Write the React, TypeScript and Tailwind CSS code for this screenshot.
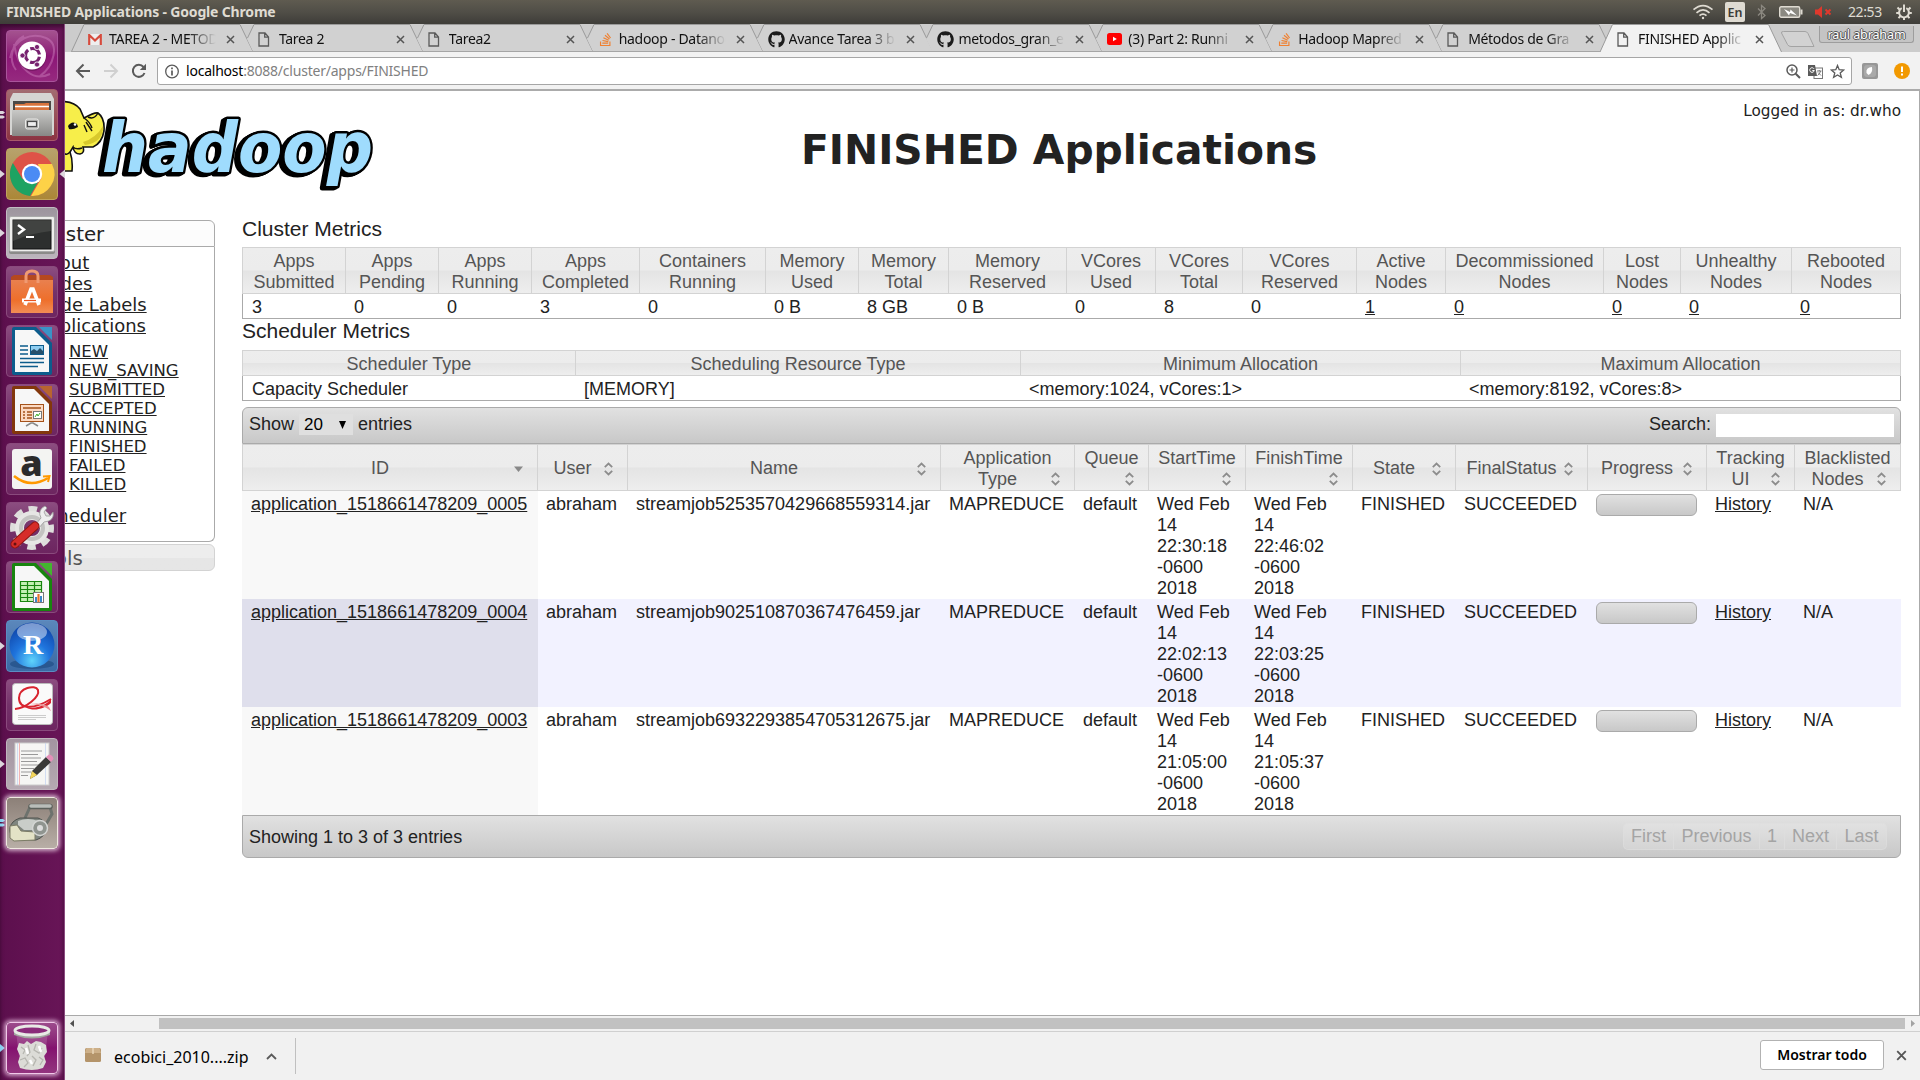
import React from "react";
import { FaGithub, FaStackOverflow } from "react-icons/fa";

/* ---------- top panel ---------- */

function Panel() {
  return (
    <header className="flex h-6 shrink-0 items-center bg-linear-to-b from-[#5f5b50] via-[#504e47] to-[#3e3d39] font-['Noto_Sans',sans-serif] text-[#dfdbd2]">
      <h1 className="pl-1.5 text-[14px] leading-6 font-bold tracking-[-0.17px] whitespace-pre">FINISHED Applications - Google Chrome</h1>
      <div className="ml-auto flex h-6 items-center pr-2">
        <svg width="22" height="18" viewBox="0 0 22 18" fill="none" stroke="#dfdbd2" strokeWidth="1.7" className="mr-[11px]">
          <path d="M1.5 6.6Q11-1.5 20.500 6.600M4.500 9.800Q11 4 17.500 9.800M7.500 12.700Q11 9.600 14.500 12.700" />
          <circle cx="11" cy="15" r="1.2" fill="#dfdbd2" stroke="none" />
        </svg>
        <span className="mr-3 h-5 w-5 rounded-[2px] bg-[#dfdbd2] text-center text-[12.500px] leading-[21px] font-semibold text-[#3c3b37]">En</span>
        <svg width="9" height="16" viewBox="0 0 9 16" fill="none" stroke="#8b8880" strokeWidth="1.3" className="mr-[13px]">
          <path d="M1 4.500 8 11.500 4.500 14.500V1.500L8 4.500 1 11.500" />
        </svg>
        <svg width="24" height="12" viewBox="0 0 24 12" className="mr-3">
          <rect x=".7" y=".7" width="20" height="10.600" rx="1.500" fill="#8b8981" stroke="#dfdbd2" strokeWidth="1.4" />
          <rect x="21.500" y="3.500" width="2" height="5" fill="#dfdbd2" />
          <path d="M5 3 11 6 11.500 3.500 18 9.500 11 7 10 9.500Z" fill="#fff" />
        </svg>
        <svg width="17" height="12" viewBox="0 0 17 12" className="mr-4">
          <path d="M0 3.500H3L7 0V12L3 8.500H0Z" fill="#df382c" />
          <path d="M10.500 3.500 15.500 8.500M15.500 3.500 10.500 8.500" stroke="#df382c" strokeWidth="2" />
        </svg>
        <time className="mr-[13px] w-[35px] text-[14px] leading-6 tracking-[-0.4px]">22:53</time>
        <svg width="16" height="16" viewBox="0 0 16 16" fill="none" stroke="#dfdbd2">
          <path d="M5.700 4.200A4.900 4.900 0 1 0 10.300 4.200" strokeWidth="2" />
          <path d="M3.500 5.500 1.500 3.500M12.500 5.500 14.500 3.500M3 9H.2M13 9H15.800M4.500 12 2.500 14.200M11.500 12 13.500 14.200M8 13.500V16" strokeWidth="2" />
          <path d="M8 .5V8" strokeWidth="2" />
        </svg>
      </div>
    </header>
  );
}

/* ---------- launcher ---------- */

const UbuntuIcon = () => (
  <g>
    <path d="M4 28C8 8 26 2 40 8S48 36 34 46M8 14C12 40 28 52 44 44M10 40C2 30 6 12 18 6" fill="none" stroke="#c97ab9" strokeWidth="2" opacity=".5" />
    <circle cx="26" cy="26.500" r="14.500" fill="#5a0d4c" opacity=".45" />
    <circle cx="26" cy="25.500" r="14" fill="#fff" />
    <circle cx="26.500" cy="25.500" r="7" fill="none" stroke="#77216f" strokeWidth="3.200" strokeDasharray="12.200 2.460" strokeDashoffset="-1.200" />
    <g fill="#77216f" stroke="#fff" strokeWidth=".8">
      <circle cx="16.500" cy="25.500" r="2.600" />
      <circle cx="31" cy="17" r="2.600" />
      <circle cx="31" cy="34.500" r="2.600" />
    </g>
  </g>
);
const FilesIcon = () => (
  <g>
    <path d="M7 4H45L48 10V46H4V10Z" fill="#d5d5d3" />
    <path d="M7 12H45V22H7Z" fill="#4b4846" />
    <path d="M9 15H18L20 14H43V22H9Z" fill="#d8743d" />
    <path d="M9 17.500H43" stroke="#fff" strokeWidth="1.500" />
    <path d="M6 21H46V47H6Z" fill="url(#metal)" />
    <rect x="19.500" y="30" width="13" height="10" rx="2" fill="#b5b5b3" stroke="#e8e8e6" />
    <rect x="21.500" y="32.500" width="9" height="5" fill="#eee" stroke="#4b4b4b" strokeWidth="1.200" />
  </g>
);
const ChromeIcon = () => (
  <g>
    <circle cx="26" cy="26" r="22" fill="#de5347" />
    <path d="M6.900 15A22 22 0 0 0 24 47.900L34 30.600 26 26 16.500 31Z" fill="#1da362" />
    <path d="M46 16A22 22 0 0 1 25 48L35.500 30 32 16Z" fill="#fdd247" />
    <circle cx="26" cy="26" r="10.200" fill="#fff" />
    <circle cx="26" cy="26" r="8" fill="#4b8bf4" />
  </g>
);
const TerminalIcon = () => (
  <g>
    <rect x="3" y="10" width="46" height="37" rx="2" fill="#8b8b89" />
    <rect x="3.500" y="9.500" width="45" height="35" rx="1.500" fill="#eeeeec" stroke="#aaa" />
    <rect x="7" y="13" width="38" height="29" fill="#2d2f2e" stroke="#111" />
    <path d="M7 13H45V24Q25 26 7 34Z" fill="#555753" opacity=".5" />
    <path d="M12 18 18 22.500 12 27" fill="none" stroke="#fff" strokeWidth="2.400" />
    <path d="M20 30H28" stroke="#fff" strokeWidth="2" />
  </g>
);
const SoftwareIcon = () => (
  <g>
    <path d="M5 11 8 9H44L47 11V15H5Z" fill="#b5481f" />
    <path d="M5 14H47V47H5Z" fill="url(#bag)" />
    <path d="M20 17V10Q20 5 26 5T32 10V17" fill="none" stroke="#f09a72" strokeWidth="3" />
    <path d="M19 39 25 23H27L33 39" fill="none" stroke="#fff" strokeWidth="3.600" />
    <path d="M16 34.500H35" stroke="#fff" strokeWidth="4" />
    <path d="M18 34.500H30" stroke="#e95420" strokeWidth="1.200" />
  </g>
);
function OfficeIcon({ main, light, kind }: { main: string; light: string; kind: string }) {
  return (
    <g>
      <path d="M8 2H30L46 18V48Q46 50 44 50H8Q6 50 6 48V4Q6 2 8 2Z" fill={main} />
      <path d="M9 5H28L43 20V47H9Z" fill="#f7f7f7" />
      <path d="M33 2H46V15Z" fill={light} />
      {kind === "writer" && (
        <g>
          <path d="M14 21H22M14 25H22M14 29H22M14 33.500H38M14 37.500H38M14 41.500H32" stroke={main} strokeWidth="1.700" />
          <rect x="24.500" y="20.500" width="13" height="9" fill="#8fcdf0" stroke={main} />
          <path d="M25 29V26L28 24 31 26 34 23 37 26V29Z" fill="#26506b" />
        </g>
      )}
      {kind === "impress" && (
        <g>
          <rect x="14.500" y="20.500" width="23" height="17" fill="#fbd9c2" stroke="#a5521a" />
          <path d="M17 24H35M21 28H26M21 31H26M21 34H26M17 28H19M17 31H19M17 34H19" stroke="#a5521a" strokeWidth="1.700" />
          <rect x="27.500" y="27.500" width="8" height="7" fill="#fff" stroke="#777" />
          <path d="M29 33 31 30 32 32 34 29" stroke="#3fae2a" fill="none" />
          <path d="M20 42 25 39H27L32 42" stroke="#888" fill="none" strokeWidth="1.500" />
        </g>
      )}
      {kind === "calc" && (
        <g>
          <path d="M14.500 20.500H35.500V40.500H14.500ZM14 24.500H35M14 28.500H35M14 32.500H35M14 36.500H35M21.500 20V41M28.500 20V41" fill="#c4f0b4" stroke="#18850f" strokeWidth="1.200" />
          <rect x="27.500" y="31.500" width="10" height="10" fill="#fff" stroke="#777" />
          <path d="M30 41V36M35 41V35" stroke="#3b87c8" strokeWidth="2" />
          <path d="M32.500 41V33" stroke="#e8722a" strokeWidth="2.200" />
        </g>
      )}
    </g>
  );
}
const AmazonIcon = () => (
  <g>
    <rect x="6" y="6" width="40" height="40" rx="3" fill="#f4f4f2" />
    <text x="25.500" y="33" textAnchor="middle" fontFamily="Open Sans, sans-serif" fontWeight="800" fontSize="36" fill="#2b2b2b">a</text>
    <path d="M8 33Q24 46 42 35" fill="none" stroke="#f90" strokeWidth="2.600" />
    <path d="M37 33.500 43.500 33 42 39" fill="none" stroke="#f90" strokeWidth="2" />
  </g>
);
const SettingsIcon = () => (
  <g>
    <circle cx="26" cy="26" r="19" fill="none" stroke="#dededc" strokeWidth="6" strokeDasharray="8.500 6.420" strokeDashoffset="4" />
    <circle cx="26" cy="26" r="12.500" fill="none" stroke="#e6e6e4" strokeWidth="9" />
    <circle cx="26" cy="26" r="11" fill="none" stroke="#c3c3c1" strokeWidth="4" />
    <path d="M29 23 35 16Q31 8 39 4L41 6 38 10 40 14 44 14 47 10Q49 19 38 20L32 27Z" fill="#eee" stroke="#999" strokeWidth=".8" />
    <path d="M9 42 29 24" stroke="#8f1513" strokeWidth="9" strokeLinecap="round" />
    <path d="M9 42 29 24" stroke="#d62c29" strokeWidth="7" strokeLinecap="round" />
    <circle cx="9" cy="42" r="1.500" fill="#64100f" />
  </g>
);
const RIcon = () => (
  <g>
    <ellipse cx="26" cy="44" rx="22" ry="5" fill="#1d4a80" opacity=".6" />
    <circle cx="26" cy="25" r="22.500" fill="url(#rball)" />
    <ellipse cx="26" cy="12" rx="15" ry="9" fill="#fff" opacity=".45" />
    <text x="27" y="34" textAnchor="middle" fontFamily="Liberation Serif, serif" fontWeight="700" fontSize="28" fill="#fff">R</text>
  </g>
);
const ReaderIcon = () => (
  <g>
    <rect x="6.500" y="4.500" width="40" height="41" rx="3" fill="#fafafa" stroke="#bbb" />
    <path d="M9 30C20 29 34 18 32 11C29 5 13 9 13 19C13 31 29 30 45 20" fill="none" stroke="#d8242f" strokeWidth="2" />
    <path d="M14 22C20 33 38 29 45 20V24C36 32 20 34 14 22Z" fill="#d8242f" />
    <path d="M24 25Q36 25 45 32L43 28Q36 23 24 25Z" fill="#e98f92" />
    <path d="M12 36.500H40M12 38.500H40M12 40.500H30" stroke="#ccc" strokeWidth="1" />
  </g>
);
const EditorIcon = () => (
  <g>
    <rect x="9" y="5" width="34" height="42" fill="#f6f6f4" stroke="#ccc" />
    <path d="M13.500 5V47" stroke="#f2b5b5" />
    <path d="M39.500 5V47M11.500 5V47" stroke="#c3d3f0" strokeWidth=".7" />
    <path d="M15 13H36M15 16.500H32M15 20H35M15 23.500H31M15 27H34M15 30.500H28M15 34H25M15 37.500H22" stroke="#999" strokeWidth="1.100" />
    <path d="M24 41 26 33 40 19 45 24 31 37Z" fill="#3a3a38" />
    <path d="M40 19 43 16.500Q47 17 47.500 21L45 24Z" fill="#e58fb8" />
    <path d="M24 41 26 33 31 37Z" fill="#f3d55b" />
  </g>
);
const ScannerIcon = () => (
  <g>
    <path d="M19 21 24 10M44 10 46 17 36 34" fill="none" stroke="#6d726d" strokeWidth="3" />
    <path d="M25 9.500H44" stroke="#5c615c" strokeWidth="5.500" strokeLinecap="round" />
    <path d="M25 9H44" stroke="#b9bdb9" strokeWidth="3.500" strokeLinecap="round" />
    <path d="M14 21H32Q41 24 40 32T30 43H9Q3 38 4 31T14 21Z" fill="#7f857f" stroke="#4c504c" />
    <path d="M12 24Q22 20 32 24V33H18L12 28Z" fill="#c9cdc9" />
    <path d="M4 29 11 28 15 34 29 35V43L8 44 4 41Z" fill="#e3e2c6" stroke="#7c7c66" />
    <circle cx="34" cy="31" r="7.500" fill="#8f948f" stroke="#d4d6d4" strokeWidth="1.500" />
    <circle cx="34" cy="31" r="3" fill="#dcdcdc" />
  </g>
);
const TrashIcon = () => (
  <g>
    <path d="M10 9 14 44Q26 50 38 44L42 9Z" fill="#fff" opacity=".15" />
    <path d="M11 27 13 21 18 22 21 19 25 22 30 19 35 20 40 23 41 30 38 34 40 40 37 46Q26 50 14 46L12 40 14 34Z" fill="#dcdcd7" />
    <path d="M15 25 19 28 17 32M22 23 24 30 21 34M30 22 28 28 33 31 36 26M14 38 19 36 22 41 18 45M26 34 30 38 27 44M33 35 37 38 34 43" stroke="#b5b5af" fill="none" strokeWidth="1.300" />
    <path d="M20 26 22 32M33 24 35 30M24 38 26 42" stroke="#fff" strokeWidth="2.500" />
    <path d="M8 8V13Q26 20 44 13V8Z" fill="#a3a7a0" />
    <ellipse cx="26" cy="8.500" rx="17" ry="4.500" fill="#8a2c7a" stroke="#e8eae5" strokeWidth="3" />
  </g>
);

const plain = "border-[#8a4a7d] bg-linear-to-b from-[#8c4d80] via-[#74326a] to-[#6d2560]";
type Mark = "two" | "one" | "both" | "twoBlue" | "oneBlue";
const apps: { icon: React.ReactNode; tile: string; mark?: Mark }[] = [
  { icon: <UbuntuIcon />, tile: "border-[#a9549b] bg-linear-to-b from-[#a4528f] via-[#8b1576] to-[#96297f]" },
  { icon: <FilesIcon />, tile: "border-[#a9586a] bg-linear-to-b from-[#a26c72] to-[#8c3342]", mark: "two" },
  { icon: <ChromeIcon />, tile: "border-[#c0a35e] bg-linear-to-b from-[#b7a26c] to-[#ab8737]", mark: "both" },
  { icon: <TerminalIcon />, tile: "border-[#c2bcc2] bg-linear-to-b from-[#9d959e] to-[#bcb5bd]", mark: "one" },
  { icon: <SoftwareIcon />, tile: plain },
  { icon: <OfficeIcon main="#0d5c8c" light="#3a93c6" kind="writer" />, tile: plain },
  { icon: <OfficeIcon main="#83370c" light="#b8652f" kind="impress" />, tile: plain },
  { icon: <AmazonIcon />, tile: plain },
  { icon: <SettingsIcon />, tile: plain },
  { icon: <OfficeIcon main="#18850f" light="#43b52f" kind="calc" />, tile: plain },
  { icon: <RIcon />, tile: "border-[#5c8dc2] bg-linear-to-b from-[#5b87bb] to-[#3a69a4]", mark: "one" },
  { icon: <ReaderIcon />, tile: plain },
  { icon: <EditorIcon />, tile: "border-[#c0b5bd] bg-linear-to-b from-[#a394a0] to-[#b5a9b2]", mark: "one" },
  { icon: <ScannerIcon />, tile: "border-[#efe8e0] bg-linear-to-b from-[#8c8078] to-[#b8aea6] shadow-[0_0_4px_2px_rgba(255,240,250,.7)]", mark: "twoBlue" },
];

function LauncherItem({ icon, tile, mark }: { icon: React.ReactNode; tile: string; mark?: Mark }) {
  const blue = mark === "twoBlue" || mark === "oneBlue";
  const color = blue ? "#7fd0f0" : "#dcd6dc";
  return (
    <div className="flex h-[52px] w-[65px] shrink-0 items-center">
      <svg width="6" height="12" viewBox="0 0 6 12" fill={color}>
        {(mark === "two" || mark === "twoBlue") && <path d="M0 2H3L5 3.500 3 5H0ZM0 6.500H3L5 8 3 9.500H0Z" />}
        {(mark === "one" || mark === "both" || mark === "oneBlue") && <path d="M0 2 4.800 6 0 10Z" />}
      </svg>
      <div className={`h-[52px] w-[52px] rounded-[4px] border ${tile}`}>
        <svg width="52" height="52" viewBox="0 0 52 52" className="-mt-px -ml-px">{icon}</svg>
      </div>
      {mark === "both" && (
        <svg width="7" height="12" viewBox="0 0 7 12" fill={color}>
          <path d="M7 1.500 1.500 6 7 10.500Z" />
        </svg>
      )}
    </div>
  );
}

function Launcher() {
  return (
    <nav className="flex w-[65px] shrink-0 flex-col gap-[7px] border-r border-[#8b4b80] bg-linear-to-r from-[#5c0f4d] to-[#681557] pt-1.5 shadow-[inset_0_3px_4px_rgba(0,0,0,.4)]">
      <svg width="0" height="0" className="-mb-[7px]">
        <defs>
          <linearGradient id="metal" x2="0" y2="1"><stop stopColor="#c9c9c7" /><stop offset="1" stopColor="#888886" /></linearGradient>
          <linearGradient id="bag" x2="0" y2="1"><stop stopColor="#e9804f" /><stop offset=".6" stopColor="#ee6f2b" /><stop offset="1" stopColor="#f28d55" /></linearGradient>
          <radialGradient id="rball" cy=".85" r=".9"><stop stopColor="#5fd4fb" /><stop offset=".45" stopColor="#1f74dd" /><stop offset="1" stopColor="#0c3da0" /></radialGradient>
        </defs>
      </svg>
      {apps.map((a, i) => <LauncherItem key={i} {...a} />)}
      <div className="mt-auto mb-[6px]">
        <LauncherItem icon={<TrashIcon />} tile="border-[#f0c8e8] bg-linear-to-b from-[#9c4b8c] via-[#84106f] to-[#93347f] shadow-[0_0_4px_2px_rgba(245,205,238,.75)]" mark="oneBlue" />
      </div>
    </nav>
  );
}

/* ---------- browser chrome ---------- */

const FileIcon = () => (
  <svg width="12" height="15" viewBox="0 0 12 15" fill="none" stroke="#5a5a5a" strokeWidth="1.300"><path d="M1 1H7L10.500 5V14H1ZM6.700 1V5.200H10.500" /></svg>
);
const GmailIcon = () => (
  <svg width="14" height="11" viewBox="0 0 14 11"><rect width="14" height="11" rx="1" fill="#eee" /><path d="M1.200 11V1L7 6.500 12.800 1V11" fill="none" stroke="#d54b3d" strokeWidth="2.200" /></svg>
);
const VideoIcon = () => (
  <svg width="15" height="12" viewBox="0 0 15 12"><rect width="15" height="12" rx="2.500" fill="#f00" /><path d="M6 3.800V8.200L9.800 6Z" fill="#fff" /></svg>
);
const tabs: { icon: React.ReactNode; title: string; active?: boolean }[] = [
  { icon: <GmailIcon />, title: "TAREA 2 - METODOS" },
  { icon: <FileIcon />, title: "Tarea 2" },
  { icon: <FileIcon />, title: "Tarea2" },
  { icon: <FaStackOverflow size={15} color="#f08030" />, title: "hadoop - Datanode" },
  { icon: <FaGithub size={17} color="#1b1b1b" />, title: "Avance Tarea 3 b" },
  { icon: <FaGithub size={17} color="#1b1b1b" />, title: "metodos_gran_e" },
  { icon: <VideoIcon />, title: "(3) Part 2: Runni" },
  { icon: <FaStackOverflow size={15} color="#f08030" />, title: "Hadoop Mapred" },
  { icon: <FileIcon />, title: "Métodos de Gra" },
  { icon: <FileIcon />, title: "FINISHED Applic", active: true },
];
const Cross = ({ s = 9 }: { s?: number }) => (
  <svg width={s} height={s} viewBox="0 0 9 9" stroke="#555" strokeWidth="1.500" className="shrink-0"><path d="M1 1 8 8M8 1 1 8" /></svg>
);

function TabStrip() {
  return (
    <div className="flex h-7 shrink-0 bg-[#cccccc] pl-1.5">
      {tabs.map((t, i) => (
        <div key={i} className="relative h-7 w-[169.900px] shrink-0">
          <svg width="184" height="28" viewBox="0 0 184 28" className="absolute top-0 left-0">
            {t.active ? (
              <path d="M0 28 12.500 .5H168.500L181.500 28" fill="#f2f2f2" stroke="#9a9a9a" />
            ) : (
              <g>
                <path d={i ? "M6 15 13 .5H169L182 27.500H12Z" : "M.5 27.500 13 .5H169L182 27.500Z"} fill="#d1d1d1" />
                <path d={i ? "M6.500 14 13 .5H169L182 27.500" : "M.5 27.500 13 .5H169L182 27.500"} fill="none" stroke="#9a9a9a" />
                <path d="M0 27.500H184" stroke="#a5a5a5" />
              </g>
            )}
          </svg>
          <div className="relative flex h-7 items-center pt-0.5 pl-[17px]">
            <span className="flex w-[21px] items-center">{t.icon}</span>
            <span className="w-[109px] overflow-hidden text-[14px] leading-6 tracking-[-0.3px] whitespace-nowrap text-[#111] [mask-image:linear-gradient(to_right,#000_72%,transparent_98%)]">{t.title}</span>
            <span className="ml-[8px]"><Cross /></span>
          </div>
        </div>
      ))}
      <svg width="36" height="18" viewBox="0 0 36 18" className="mt-1.5 ml-2.5"><path d="M3.500 1.500H25Q27 1.500 28 3.500L34 16.500H11Q8.500 16.500 7.500 14.500L1.500 3Q1 1.500 3.500 1.500Z" fill="#d2d2d2" stroke="#a3a3a3" /></svg>
      <div className="mt-0.5 mr-1.5 ml-auto h-[17px] w-[95px] rounded-b-[3px] border border-t-0 border-[#9d9d9d] bg-[#c4c4c4] text-center text-[12.500px] leading-[17px] tracking-[-0.1px] text-white [text-shadow:1px_0_0_#555,-1px_0_0_#555,0_1px_0_#555,0_-1px_0_#555]">raul abraham</div>
    </div>
  );
}

function Toolbar() {
  return (
    <div className="flex h-[39px] shrink-0 items-start border-b-2 border-[#ababab] bg-[#f2f2f2] pt-[5px] pl-2.5">
      <div className="flex h-7 w-[82px] items-center gap-3">
        <svg width="16" height="16" viewBox="0 0 16 16" fill="none" stroke="#5a5a5a" strokeWidth="2"><path d="M15 8H2M8.500 1.500 2 8 8.500 14.500" /></svg>
        <svg width="16" height="16" viewBox="0 0 16 16" fill="none" stroke="#d0d0d0" strokeWidth="2"><path d="M1 8H14M7.500 1.500 14 8 7.500 14.500" /></svg>
        <svg width="16" height="16" viewBox="0 0 16 16" fill="none" stroke="#5a5a5a" strokeWidth="2"><path d="M13.500 10A6 6 0 1 1 12.500 4" /><path d="M15 .8V7H8.800Z" fill="#5a5a5a" stroke="none" /></svg>
      </div>
      <div className="flex h-7 w-[1695px] items-center rounded-[3px] border border-[#a6a6a6] bg-white pr-1.5 pl-[7px]">
        <svg width="15" height="15" viewBox="0 0 15 15" fill="none" stroke="#5a5a5a" strokeWidth="1.300"><circle cx="7" cy="7.500" r="6.300" /><path d="M7 6.500V11.500M7 3.500V5.200" strokeWidth="1.700" /></svg>
        <span className="ml-[6px] text-[14px] leading-6 tracking-[-0.22px] text-[#808080]"><span className="text-black">localhost</span>:8088/cluster/apps/FINISHED</span>
        <svg width="15" height="15" viewBox="0 0 15 15" fill="none" stroke="#5a5a5a" strokeWidth="1.500" className="ml-auto"><circle cx="6" cy="6" r="5" /><path d="M9.700 9.700 14 14" strokeWidth="2" /><path d="M3.500 6H8.500M6 3.500V8.500" strokeWidth="1.200" /></svg>
        <svg width="15" height="15" viewBox="0 0 15 15" className="ml-[7px]"><rect x="6" y="4" width="8.500" height="10.500" fill="#fff" stroke="#777" /><path d="M0 1H7L9 12H0Z" fill="#5a5a5a" /><path d="M6 4.800A2.300 2.300 0 1 0 6.300 6.500H4.300" fill="none" stroke="#fff" /><path d="M9 7H13.500M11.200 6V7M12.500 7Q12 10 9.500 11.500M10 8.500 13 11.500" stroke="#666" fill="none" strokeWidth=".9" /></svg>
        <svg width="15" height="15" viewBox="0 0 15 15" fill="none" stroke="#5a5a5a" strokeWidth="1.300" className="ml-[7px]"><path d="M7.500 1.500 9.200 5.700 13.700 6 10.200 8.900 11.400 13.300 7.500 10.900 3.600 13.300 4.800 8.900 1.300 6 5.800 5.700Z" /></svg>
      </div>
      <svg width="16" height="16" viewBox="0 0 16 16" className="mt-1.5 ml-2.5"><rect width="16" height="16" rx="2" fill="#979797" /><rect x="2" y="2" width="12" height="12" rx="3" fill="#a9a9a9" /><path d="M4.500 10Q3.500 4.500 10 4Q11 10 6.500 12Z" fill="#fff" /></svg>
      <svg width="16" height="16" viewBox="0 0 16 16" className="mt-1.5 ml-4"><circle cx="8" cy="8" r="8" fill="#f29900" /><path d="M8 3.500V9M8 10.500V12.500" stroke="#fff" strokeWidth="2" /></svg>
    </div>
  );
}

/* ---------- page ---------- */

function HadoopLogo() {
  return (
    <svg width="312" height="100" viewBox="65 91 312 100" className="shrink-0">
      <text
        x="102"
        y="171.500"
        textLength="271"
        lengthAdjust="spacingAndGlyphs"
        fontFamily="DejaVu Sans, sans-serif"
        fontWeight="700"
        fontStyle="italic"
        fontSize="69"
        strokeLinejoin="round"
        strokeWidth="5"
        stroke="#000"
        fill="#9fdcfd"
        className="[paint-order:stroke] [filter:drop-shadow(-2px_1px_0_#000)_drop-shadow(-2px_1px_0_#000)]"
      >
        hadoop
      </text>
      <path d="M60 101.500Q74 101 80 109L84 118Q95 112 98 113Q105 118 104 131Q102 143 93 147L83 147Q85 153 80 154Q74 154 73 147L70 152Q73 160 72 171H60Z" fill="#f7ee4a" stroke="#111" strokeWidth="1.600" />
      <path d="M85 145Q103 143 103 126Q96 138 83 142Z" fill="#d8c92c" />
      <path d="M84 118Q90 122 92 128M98 113Q94 120 88 117M86 122 92 131M84 125 87 132M70 152Q66 156 64 153M73 147Q76 150 82 148" fill="none" stroke="#111" strokeWidth="1.400" />
      <path d="M68 126Q72 120 77 124L78 127Q73 130 69 129Z" fill="#111" />
      <circle cx="75" cy="124.500" r="1.300" fill="#fff" />
    </svg>
  );
}

const states = ["NEW", "NEW_SAVING", "SUBMITTED", "ACCEPTED", "RUNNING", "FINISHED", "FAILED", "KILLED"];

function Sidebar() {
  return (
    <aside className="w-[150px] shrink-0 overflow-hidden font-['DejaVu_Sans',sans-serif] text-[18px] leading-[21px] text-[#222]">
      <div className="-ml-10 h-[27px] rounded-tr-[6px] border border-[#aaa] bg-[#fcfcfc] pl-2 text-[19.800px] leading-[27px]">Cluster</div>
      <div className="-ml-10 h-[295px] rounded-br-[6px] border border-t-0 border-[#aaa] pt-[5px] pl-[10px]">
        <ul>
          {["About", "Nodes", "Node Labels", "Applications"].map((l) => (
            <li key={l}><a className="underline">{l}</a></li>
          ))}
          <ul className="mt-[6px] ml-[33px] text-[16.500px] leading-[19px]">
            {states.map((s) => <li key={s}><a className="underline">{s}</a></li>)}
          </ul>
          <li className="mt-[11px]"><a className="underline">Scheduler</a></li>
        </ul>
      </div>
      <div className="mt-[2px] -ml-10 h-[27px] rounded-r-[6px] border border-[#d3d3d3] bg-linear-to-b from-[#ededed] from-50% to-[#e6e6e6] to-50% pl-2 text-[19.800px] leading-[27px] text-[#555]">Tools</div>
    </aside>
  );
}

const thTone = "bg-[linear-gradient(#ededed_0,#ececec_49%,#e4e4e4_51%,#eeeeee_100%)] text-[#555]";

function InfoTable({ cols, values, widths, headHeight, linkFrom = 99 }: { cols: string[][]; values: string[]; widths: number[]; headHeight: string; linkFrom?: number }) {
  return (
    <table className="w-[1659px] table-fixed border-separate border-spacing-0">
      <colgroup>{widths.map((w, i) => <col key={i} style={{ width: w }} />)}</colgroup>
      <thead>
        <tr>
          {cols.map((c, i) => (
            <th key={i} className={`border-y border-r border-[#d3d3d3] p-0 pt-[2px] font-normal first:border-l ${headHeight} ${thTone}`}>
              {c.map((l) => <div key={l}>{l}</div>)}
            </th>
          ))}
        </tr>
      </thead>
      <tbody>
        <tr>
          {values.map((v, i) => (
            <td key={i} className="h-[25px] border-b border-[#aaa] p-0 pt-[2px] pl-2 first:border-l first:pl-[9px] last:border-r">
              <span className={i >= linkFrom ? "underline" : ""}>{v}</span>
            </td>
          ))}
        </tr>
      </tbody>
    </table>
  );
}

const metricCols = [["Apps", "Submitted"], ["Apps", "Pending"], ["Apps", "Running"], ["Apps", "Completed"], ["Containers", "Running"], ["Memory", "Used"], ["Memory", "Total"], ["Memory", "Reserved"], ["VCores", "Used"], ["VCores", "Total"], ["VCores", "Reserved"], ["Active", "Nodes"], ["Decommissioned", "Nodes"], ["Lost", "Nodes"], ["Unhealthy", "Nodes"], ["Rebooted", "Nodes"]];
const metricVals = ["3", "0", "0", "3", "0", "0 B", "8 GB", "0 B", "0", "8", "0", "1", "0", "0", "0", "0"];
const metricW = [104, 93, 93, 108, 126, 93, 90, 118, 89, 87, 114, 89, 158, 77, 111, 109];

const appCols = [["ID"], ["User"], ["Name"], ["Application", "Type"], ["Queue", ""], ["StartTime", ""], ["FinishTime", ""], ["State"], ["FinalStatus"], ["Progress"], ["Tracking", "UI"], ["Blacklisted", "Nodes"]];
const appW = [296, 90, 313, 134, 74, 97, 107, 103, 132, 119, 88, 106];
const appRows = [
  { id: "application_1518661478209_0005", name: "streamjob5253570429668559314.jar", start: "22:30:18", end: "22:46:02" },
  { id: "application_1518661478209_0004", name: "streamjob902510870367476459.jar", start: "22:02:13", end: "22:03:25" },
  { id: "application_1518661478209_0003", name: "streamjob6932293854705312675.jar", start: "21:05:00", end: "21:05:37" },
];

const SortIcon = ({ desc }: { desc?: boolean }) => (
  <svg width="9" height="14" viewBox="0 0 9 14" className="mr-[14px] shrink-0">
    {desc ? <path d="M0 4.500H9L4.500 10Z" fill="#888" /> : <path d="M.8 5.200 4.500 1.500 8.200 5.200M.8 8.800 4.500 12.500 8.200 8.800" fill="none" stroke="#8c8c8c" strokeWidth="1.800" />}
  </svg>
);
const Stamp = ({ time }: { time: string }) => (
  <>
    Wed Feb<br />14<br />{time}<br />-0600<br />2018
  </>
);
const bar = "border border-[#aaa] bg-linear-to-b from-[#e1e1e1] to-[#c8c8c8]";

function AppsTable() {
  return (
    <section className="mt-1.5">
      <div className={`flex h-[37px] rounded-t-[6px] pr-1.5 pl-[6px] ${bar}`}>
        <span className="mt-[6px] leading-[21px]">Show</span>
        <span className="mt-1.5 ml-[5px] flex h-[21px] w-[54px] items-center justify-between bg-[#dfdfdf] pr-[7px] pl-[5px] text-[17px] text-black">
          20
          <svg width="7" height="8" viewBox="0 0 7 8"><path d="M0 0H7L3.500 8Z" /></svg>
        </span>
        <span className="mt-[6px] ml-[5px] leading-[21px]">entries</span>
        <span className="mt-[6px] mr-[5px] ml-auto leading-[21px]">Search:</span>
        <input className="mt-1.5 h-[23px] w-[178px] bg-white" />
      </div>
      <table className="w-[1659px] table-fixed border-separate border-spacing-0">
        <colgroup>{appW.map((w, i) => <col key={i} style={{ width: w }} />)}</colgroup>
        <thead>
          <tr>
            {appCols.map((c, i) => (
              <th key={i} className={`h-[47px] border-y border-r border-[#d3d3d3] p-0 pt-[2px] font-normal first:border-l ${thTone}`}>
                {c.length > 1 && <div>{c[0]}</div>}
                <div className="flex h-[21px] items-center pl-[3px]">
                  <span className="flex-1">{c[c.length - 1]}</span>
                  <SortIcon desc={i === 0} />
                </div>
              </th>
            ))}
          </tr>
        </thead>
        <tbody>
          {appRows.map((r) => (
            <tr key={r.id} className="group h-[108px] align-top even:bg-[#f2f2ff] [&>td]:p-0 [&>td]:pt-[3px] [&>td]:pl-2">
              <td className="border-l border-transparent bg-[#f8f8f8] bg-clip-border group-even:bg-[#dfdfec]"><a className="underline">{r.id}</a></td>
              <td>abraham</td>
              <td>{r.name}</td>
              <td>MAPREDUCE</td>
              <td>default</td>
              <td><Stamp time={r.start} /></td>
              <td><Stamp time={r.end} /></td>
              <td>FINISHED</td>
              <td>SUCCEEDED</td>
              <td><div className={`h-[22px] w-[101px] rounded-[6px] ${bar}`} /></td>
              <td><a className="underline">History</a></td>
              <td>N/A</td>
            </tr>
          ))}
        </tbody>
      </table>
      <div className={`flex h-[43px] items-center rounded-b-[6px] pr-[13px] pl-[6px] ${bar}`}>
        <span className="pt-[2px]">Showing 1 to 3 of 3 entries</span>
        <div className="ml-auto flex h-[27px] overflow-hidden rounded-[5px] border border-[#dedede]/60 bg-white/15 text-center leading-[25px] text-[#a4a4a4]">
          <span className="w-[50px] border-r border-[#dedede]/70">First</span>
          <span className="w-[86px] border-r border-[#dedede]/70">Previous</span>
          <span className="w-[25px] border-r border-[#dedede]/70">1</span>
          <span className="w-[52px] border-r border-[#dedede]/70">Next</span>
          <span className="w-[49px]">Last</span>
        </div>
      </div>
    </section>
  );
}

function Page() {
  return (
    <main className="flex min-h-0 flex-1 flex-col overflow-hidden border-r border-[#aaa] bg-white text-[#222]">
      <div className="flex h-[126px] shrink-0 font-['DejaVu_Sans',sans-serif]">
        <div className="w-[736px] shrink-0"><HadoopLogo /></div>
        <h2 className="mt-[35px] text-[40.800px] leading-[48px] font-bold whitespace-nowrap">FINISHED Applications</h2>
        <div className="mt-[10px] mr-[18px] ml-auto text-[15.250px] leading-5 whitespace-nowrap">Logged in as: dr.who</div>
      </div>
      <div className="flex">
        <div className="pt-[3px]"><Sidebar /></div>
        <div className="ml-[27px] w-[1659px] shrink-0 font-['Liberation_Sans',sans-serif] text-[18px] leading-[21px]">
          <h3 className="mb-1.5 text-[21px] leading-6">Cluster Metrics</h3>
          <InfoTable cols={metricCols} values={metricVals} widths={metricW} headHeight="h-[47px]" linkFrom={11} />
          <h3 className="mb-[7px] text-[21px] leading-6">Scheduler Metrics</h3>
          <InfoTable
            cols={[["Scheduler Type"], ["Scheduling Resource Type"], ["Minimum Allocation"], ["Maximum Allocation"]]}
            values={["Capacity Scheduler", "[MEMORY]", "<memory:1024, vCores:1>", "<memory:8192, vCores:8>"]}
            widths={[334, 445, 440, 440]}
            headHeight="h-[26px]"
          />
          <AppsTable />
        </div>
      </div>
    </main>
  );
}

function ScrollBar() {
  return (
    <div className="flex h-[17px] shrink-0 items-center border-t border-b border-t-[#a9a9a9] border-b-[#d0d0d0] bg-[#f1f1f1] pl-[5px]">
      <svg width="4" height="7" viewBox="0 0 4 7"><path d="M4 0V7L0 3.500Z" fill="#505050" /></svg>
      <div className="ml-[85px] h-[11px] w-[1746px] bg-[#c1c1c1]" />
      <svg width="4" height="7" viewBox="0 0 4 7" className="ml-1.5"><path d="M0 0V7L4 3.500Z" fill="#a3a3a3" /></svg>
    </div>
  );
}

function DownloadShelf() {
  return (
    <footer className="flex h-12 shrink-0 items-center bg-[#f1f1f1] pl-5 text-black">
      <svg width="16" height="14" viewBox="0 0 16 14" className="mb-0.5"><rect width="16" height="14" rx="1.500" fill="#b4946a" /><path d="M1.500 0H14.500L16 5H0Z" fill="#cdb089" /><path d="M8 0V6" stroke="#e8d6b8" strokeWidth="1.500" /></svg>
      <span className="ml-[13px] w-[134px] pt-0.5 text-[16px] leading-6 whitespace-nowrap">ecobici_2010....zip</span>
      <svg width="11" height="7" viewBox="0 0 11 7" fill="none" stroke="#5a5a5a" strokeWidth="1.800" className="ml-[18px]"><path d="M1 6 5.500 1.500 10 6" /></svg>
      <div className="ml-[18px] h-9 w-px bg-[#c0c0c0]" />
      <button className="mr-[12px] mb-0.5 ml-auto h-[30px] w-[124px] rounded-[3px] border border-[#b2b2b2] bg-white text-[14px] leading-7 font-semibold">Mostrar todo</button>
      <span className="mr-[13px] mb-0.5"><Cross s={11} /></span>
    </footer>
  );
}

export default function App() {
  return (
    <div className="flex h-[1080px] w-[1920px] flex-col overflow-hidden bg-white">
      <Panel />
      <div className="flex min-h-0 flex-1">
        <Launcher />
        <div className="flex w-[1855px] flex-col font-['Noto_Sans',sans-serif]">
          <TabStrip />
          <Toolbar />
          <Page />
          <ScrollBar />
          <DownloadShelf />
        </div>
      </div>
    </div>
  );
}
